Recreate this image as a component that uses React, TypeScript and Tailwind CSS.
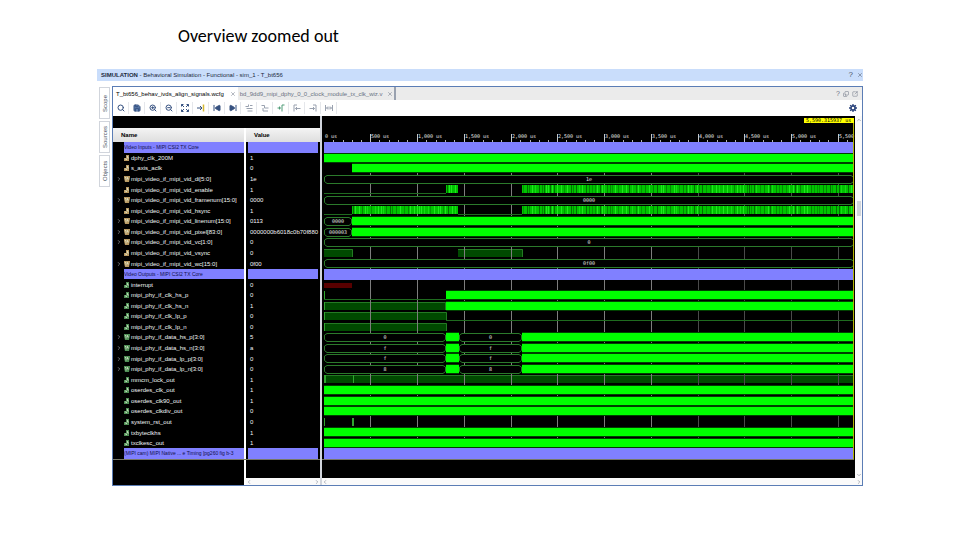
import type { ReactNode } from 'react';
import { ArrowRightToLine, ChevronDown, ChevronLeft, ChevronRight, ChevronUp, Copy, Save, Search, SkipBack, SkipForward, SquareArrowOutUpRight, X, ZoomIn, ZoomOut } from 'lucide-react';
import { clsx } from 'clsx';

type Kind = 'divider' | 'input' | 'output';

// lo: low line, hi: shaded high level, clk: solid toggling, burst: dense pulses
type Segment = { t: 'lo' | 'hi' | 'clk' | 'burst' | 'bus' | 'undef' | 'tick'; x: number; w: number; label?: string };

type Signal = { name: string; kind: Kind; value?: string; bus?: boolean; wave?: Segment[] };

const END = 530;
const ROW_H = 317 / 30;
const ROWS_TOP = 26;
const STEP = 46.75;

const clock = (x = 0): Segment[] => [{ t: 'clk', x, w: END - x }];
const bus = (label: string): Segment[] => [{ t: 'bus', x: 0, w: END, label }];
const dataLane = (a: string, b: string): Segment[] => [
  { t: 'bus', x: 0, w: 122, label: a },
  { t: 'clk', x: 122, w: 13 },
  { t: 'bus', x: 135, w: 63, label: b },
  { t: 'clk', x: 198, w: END - 198 },
];

const signals: Signal[] = [
  { name: 'Video Inputs - MIPI CSI2 TX Core', kind: 'divider' },
  { name: 'dphy_clk_200M', kind: 'input', value: '1', wave: clock() },
  { name: 's_axis_aclk', kind: 'input', value: '0', wave: clock(28) },
  { name: 'mipi_video_if_mipi_vid_di[5:0]', kind: 'input', bus: true, value: '1e', wave: bus('1e') },
  {
    name: 'mipi_video_if_mipi_vid_enable', kind: 'input', value: '1',
    wave: [{ t: 'lo', x: 0, w: 122 }, { t: 'burst', x: 122, w: 12 }, { t: 'burst', x: 198, w: END - 198 }],
  },
  { name: 'mipi_video_if_mipi_vid_framenum[15:0]', kind: 'input', bus: true, value: '0000', wave: bus('0000') },
  {
    name: 'mipi_video_if_mipi_vid_hsync', kind: 'input', value: '1',
    wave: [
      { t: 'lo', x: 0, w: 28 }, { t: 'burst', x: 28, w: 106 },
      { t: 'lo', x: 134, w: 64 }, { t: 'burst', x: 198, w: END - 198 },
    ],
  },
  {
    name: 'mipi_video_if_mipi_vid_linenum[15:0]', kind: 'input', bus: true, value: '0113',
    wave: [{ t: 'bus', x: 0, w: 28, label: '0000' }, ...clock(28)],
  },
  {
    name: 'mipi_video_if_mipi_vid_pixel[83:0]', kind: 'input', bus: true, value: '0000000b6018c0b70f880',
    wave: [{ t: 'bus', x: 0, w: 28, label: '000003' }, ...clock(28)],
  },
  { name: 'mipi_video_if_mipi_vid_vc[1:0]', kind: 'input', bus: true, value: '0', wave: bus('0') },
  {
    name: 'mipi_video_if_mipi_vid_vsync', kind: 'input', value: '0',
    wave: [{ t: 'hi', x: 0, w: 29 }, { t: 'hi', x: 134, w: 65 }],
  },
  { name: 'mipi_video_if_mipi_vid_wc[15:0]', kind: 'input', bus: true, value: '0f00', wave: bus('0f00') },
  { name: 'Video Outputs - MIPI CSI2 TX Core', kind: 'divider' },
  { name: 'interrupt', kind: 'output', value: '0', wave: [{ t: 'undef', x: 0, w: 28 }] },
  {
    name: 'mipi_phy_if_clk_hs_p', kind: 'output', value: '0',
    wave: [{ t: 'tick', x: 0, w: 1 }, { t: 'lo', x: 0, w: 122 }, ...clock(122)],
  },
  {
    name: 'mipi_phy_if_clk_hs_n', kind: 'output', value: '1',
    wave: [{ t: 'hi', x: 0, w: 122 }, { t: 'tick', x: 0, w: 1 }, ...clock(122)],
  },
  {
    name: 'mipi_phy_if_clk_lp_p', kind: 'output', value: '0',
    wave: [{ t: 'hi', x: 0, w: 123 }, { t: 'tick', x: 0, w: 1 }, { t: 'lo', x: 122, w: END - 122 }],
  },
  {
    name: 'mipi_phy_if_clk_lp_n', kind: 'output', value: '0',
    wave: [{ t: 'hi', x: 0, w: 123 }, { t: 'tick', x: 0, w: 1 }],
  },
  { name: 'mipi_phy_if_data_hs_p[3:0]', kind: 'output', bus: true, value: '5', wave: dataLane('0', '0') },
  { name: 'mipi_phy_if_data_hs_n[3:0]', kind: 'output', bus: true, value: 'a', wave: dataLane('f', 'f') },
  { name: 'mipi_phy_if_data_lp_p[3:0]', kind: 'output', bus: true, value: '0', wave: dataLane('f', 'f') },
  { name: 'mipi_phy_if_data_lp_n[3:0]', kind: 'output', bus: true, value: '0', wave: dataLane('8', '8') },
  {
    name: 'mmcm_lock_out', kind: 'output', value: '1',
    wave: [{ t: 'hi', x: 0, w: END }, { t: 'tick', x: 0, w: 2 }, { t: 'tick', x: 29, w: 1 }],
  },
  { name: 'oserdes_clk_out', kind: 'output', value: '1', wave: clock() },
  { name: 'oserdes_clk90_out', kind: 'output', value: '1', wave: clock() },
  { name: 'oserdes_clkdiv_out', kind: 'output', value: '0', wave: clock() },
  { name: 'system_rst_out', kind: 'output', value: '0', wave: [{ t: 'tick', x: 0, w: 1 }, { t: 'tick', x: 28, w: 2 }] },
  { name: 'txbyteclkhs', kind: 'output', value: '1', wave: clock() },
  { name: 'txclkesc_out', kind: 'output', value: '1', wave: clock() },
  { name: '(MIPI cam) MIPI Native ... e Timing [pg260 fig b-3', kind: 'divider' },
];

// the last label runs out of room at the right edge
const rulerLabels = ['0 us', '500 us', '1,000 us', '1,500 us', '2,000 us', '2,500 us', '3,000 us', '3,500 us', '4,000 us', '4,500 us', '5,000 us', '5,500'];

function Burst({ x, w }: { x: number; w: number }) {
  const pulses: ReactNode[] = [];
  const shades = ['#008c00', '#1fe81f', '#009a00', '#007200', '#14dc14', '#1fe81f'];
  let seed = x * 7 + 3;
  for (let p = 1; p < w - 1;) {
    seed = (seed * 16807) % 2147483647;
    pulses.push(<rect key={p} x={x + p} y={1} width={1} height={8} fill={shades[Math.floor(seed / 65536) % shades.length]} />);
    p += 2 + (Math.floor(seed / 4096) % 3);
  }
  return (
    <g>
      <rect x={x} y={1} width={w} height={8} fill="#00c400" />
      {pulses}
    </g>
  );
}

function Wave({ seg }: { seg: Segment }) {
  const { x, w } = seg;
  switch (seg.t) {
    case 'clk':
      return (
        <g>
          <rect x={x} y={0} width={w} height={10} fill="#004000" />
          <rect x={x} y={1} width={w} height={8} fill="#00ff00" />
        </g>
      );
    case 'lo':
      return <rect x={x} y={9} width={w} height={1} fill="#1f6b1f" />;
    case 'burst':
      return <Burst x={x} w={w} />;
    case 'undef':
      return <rect x={x} y={4} width={w} height={5} fill="#580000" />;
    case 'tick':
      return <rect x={x} y={1} width={w} height={8} fill="#2fa52f" />;
    case 'bus':
      return (
        <g>
          <path
            d={`M${x + 3} 1.5H${x + w - 3}L${x + w - 0.5} 3V7.5L${x + w - 3} 9.5H${x + 3}L${x + 0.5} 7.5V3Z`}
            fill="#000"
            stroke="#2b7a2b"
          />
          <text x={x + w / 2} y={7} textAnchor="middle" fill="#e5e5e5" className="font-['DejaVu_Sans_Mono',monospace] text-[5px]">
            {seg.label}
          </text>
        </g>
      );
    default:
      return null;
  }
}

function Waveform() {
  const rows = signals.map((s, i) => ({ ...s, y: Math.round(ROWS_TOP + i * ROW_H) }));
  return (
    <svg className="block h-[362px] w-full bg-black" role="img" aria-label="Waveform">
      <g transform="translate(2 0)">
        {rows.map((r) => r.wave?.filter((s) => s.t === 'hi').map((s) => (
          <g key={`${r.y}-${s.x}`}>
            <rect x={s.x} y={r.y + 1} width={s.w} height={8} fill="#004a00" />
            <path d={`M${s.x} ${r.y + 1.5}H${s.x + s.w - 0.5}V${r.y + 9}`} fill="none" stroke="#247a24" />
          </g>
        )))}

        {rulerLabels.map((label, i) => {
          const x = Math.floor(i * STEP);
          return (
            <g key={label}>
              {i > 0 && <rect x={x} y={18} width={1} height={325} fill={i > 7 ? '#4a4a4a' : '#7d7d7d'} />}
              {i > 0 && <rect x={x} y={18} width={1} height={8} fill="#c8c8c8" />}
              {[1, 2, 3, 4].map((m) => (
                <rect key={m} x={Math.round(x + (m * STEP) / 5)} y={24} width={1} height={2} fill="#b5b5b5" />
              ))}
              <text x={x + 1} y={22} fill="#e8e8e8" className="font-['DejaVu_Sans_Mono',monospace] text-[5px]">{label}</text>
            </g>
          );
        })}

        {rows.map((r) => (
          <g key={r.y} transform={`translate(0 ${r.y})`}>
            {r.kind === 'divider' && <rect y={0} width={END} height={11} fill="#8080ff" />}
            {r.wave?.map((s, i) => <Wave key={i} seg={s} />)}
          </g>
        ))}

        <rect x={-2} y={343} width={532} height={1} fill="#777766" />
        <rect x={529} y={2} width={1} height={341} fill="#b5b500" />
        <rect x={480} y={2} width={50} height={5} fill="#ffff00" />
        <text x={482} y={6} fill="#000" className="font-['DejaVu_Sans_Mono',monospace] text-[5px]">5,590.315937 us</text>
      </g>
    </svg>
  );
}

function SignalIcon({ kind, bus }: { kind: Kind; bus?: boolean }) {
  const frame = kind === 'input' ? '#b99a62' : '#4f8f55';
  return (
    <svg viewBox="0 0 6 6" className="h-1.5 w-1.5 shrink-0">
      <path d={bus ? 'M0 0h6v1L5 6H1L0 2z' : 'M0 3h2V0h3v6H0z'} fill={frame} />
      <path d={bus ? 'M1 1.5h1v3M3.5 1v2H5' : 'M1 4h1.5v1M3.5 1v2H5'} fill="none" stroke="#e4efd8" strokeWidth="0.7" />
    </svg>
  );
}

function SignalTable() {
  return (
    <table className="grid grid-rows-[14px_317px] bg-white text-[6px] leading-none text-gray-100">
      <thead className="grid">
        <tr className="grid grid-cols-[131px_74px] gap-x-0.5 text-left text-black">
          <th className="flex items-center bg-linear-to-b from-[#f4f4f4] to-[#dedede] pl-2">Name</th>
          <th className="flex items-center bg-linear-to-b from-[#f4f4f4] to-[#dedede] pl-2">Value</th>
        </tr>
      </thead>
      <tbody className="grid auto-rows-fr">
        {signals.map((s) => (
          <tr key={s.name} className="grid min-h-0 grid-cols-[131px_74px] gap-x-0.5">
            <td className="flex min-w-0 items-center overflow-hidden bg-black whitespace-nowrap">
              <span className="flex w-[11px] shrink-0 justify-center">
                {s.bus && (
                  <button aria-label={`Expand ${s.name}`} className="text-gray-300">
                    <ChevronRight className="h-1.5 w-1.5" />
                  </button>
                )}
              </span>
              {s.kind === 'divider' ? (
                <span className="flex h-full flex-1 items-center bg-[#8080ff] text-[5px] text-[#10104a]">{s.name}</span>
              ) : (
                <span className="flex items-center gap-px">
                  <SignalIcon kind={s.kind} bus={s.bus} />
                  {s.name}
                </span>
              )}
            </td>
            <td className={clsx('flex min-w-0 items-center overflow-hidden bg-black', s.kind === 'divider' ? 'px-0.5' : 'pl-1')}>
              {s.kind === 'divider' ? <span className="h-full flex-1 bg-[#8080ff]" /> : s.value}
            </td>
          </tr>
        ))}
      </tbody>
    </table>
  );
}

function ToolIcon({ d, mark }: { d: string; mark?: string }) {
  return (
    <svg viewBox="0 0 16 16" className="h-2 w-2" fill="none" stroke="currentColor" strokeWidth="2">
      <path d={d} />
      {mark && <path d={mark} stroke="#d6b933" strokeWidth="3" />}
    </svg>
  );
}

const lucide = 'h-2 w-2 stroke-3';

const tools: { label: string; icon: ReactNode; tone?: string }[] = [
  { label: 'Find', icon: <Search className={lucide} /> },
  { label: 'Save', icon: <Save className={clsx(lucide, 'fill-[#5f7fae]')} /> },
  { label: 'Zoom in', icon: <ZoomIn className={lucide} /> },
  { label: 'Zoom out', icon: <ZoomOut className={lucide} /> },
  { label: 'Zoom fit', icon: <ToolIcon d="M1 5V1h4M1 1l5 5M11 1h4v4M15 1l-5 5M1 11v4h4M1 15l5-5M15 11v4h-4M15 15l-5-5" /> },
  { label: 'Go to cursor', icon: <ToolIcon d="M0 8h9M6 4l4 4-4 4" mark="M13 1v14" /> },
  { label: 'Go to start', icon: <SkipBack className={clsx(lucide, 'fill-current')} /> },
  { label: 'Go to end', icon: <SkipForward className={clsx(lucide, 'fill-current')} /> },
  { label: 'Previous transition', icon: <ToolIcon d="M1 5h6V1M3 9h12M5 14h10M10 3h5" />, tone: 'text-gray-400' },
  { label: 'Next transition', icon: <ToolIcon d="M1 3h6v5h8M4 8v6h10" />, tone: 'text-gray-400' },
  { label: 'Add marker', icon: <ToolIcon d="M1 8h7M5 5v6M10 15V2h5" />, tone: 'text-[#4e9b77]' },
  { label: 'Previous marker', icon: <ToolIcon d="M8 2H2v13M5 9h10M8 6L5 9l3 3" />, tone: 'text-gray-400' },
  { label: 'Next marker', icon: <ToolIcon d="M8 2h6v13M1 9h10M8 6l3 3-3 3" />, tone: 'text-gray-400' },
  { label: 'Swap cursors', icon: <ToolIcon d="M1 2v12M15 2v12M3 8h10M6 5L3 8l3 3M10 5l3 3-3 3" />, tone: 'text-gray-400' },
];

function Toolbar() {
  return (
    <div className="flex h-4 items-center justify-between bg-white pr-[5px]">
      <div className="flex">
        {tools.map((t) => (
          <button
            key={t.label}
            aria-label={t.label}
            className={clsx('flex h-3 w-4 items-center justify-center border-r border-gray-200', t.tone ?? 'text-[#35507f]')}
          >
            {t.icon}
          </button>
        ))}
      </div>
      <button aria-label="Settings" className="text-[#2b447c]">
        <svg viewBox="0 0 16 16" className="h-2 w-2" fill="none" stroke="currentColor">
          <circle cx="8" cy="8" r="4.2" strokeWidth="3.4" />
          <path d="M8 0v3M8 13v3M0 8h3M13 8h3M2.3 2.3l2 2M11.7 11.7l2 2M2.3 13.7l2-2M11.7 4.3l2-2" strokeWidth="2.6" />
        </svg>
      </button>
    </div>
  );
}

function FileTabs() {
  return (
    <div className="flex h-[13px] items-stretch bg-[#ebebeb] text-[6px] leading-none">
      <div className="flex items-center gap-1.5 bg-white pr-0.5 pl-[3px]">
        <button className="text-black">T_bt656_behav_ivds_align_signals.wcfg</button>
        <button aria-label="Close tab" className="text-gray-500"><X className="h-1.5 w-1.5" /></button>
      </div>
      <div className="flex items-center gap-1 border-r-2 border-gray-400 pr-px pl-0.5 text-gray-500">
        <button>bd_9dd9_mipi_dphy_0_0_clock_module_tx_clk_wiz.v</button>
        <button aria-label="Close tab"><X className="h-1.5 w-1.5" /></button>
      </div>
      <div className="ml-auto flex items-center gap-[3px] pr-1 text-gray-500">
        <button aria-label="Help" className="text-[7px]">?</button>
        <button aria-label="Restore"><Copy className="h-1.5 w-1.5 -scale-y-100" /></button>
        <button aria-label="Float"><SquareArrowOutUpRight className="h-1.5 w-1.5" /></button>
      </div>
    </div>
  );
}

function SideTabs() {
  return (
    <div className="flex w-[15px] flex-col items-start pt-1.5 pl-0.5 text-[6px] leading-none text-gray-600">
      {['Scope', 'Sources', 'Objects'].map((label) => (
        <button
          key={label}
          className="mb-0.5 flex h-8 w-[11px] rotate-180 items-center justify-center border border-gray-300 bg-white [writing-mode:vertical-rl]"
        >
          {label}
        </button>
      ))}
    </div>
  );
}

export default function App() {
  return (
    <main className="min-h-screen bg-white px-[97px] font-['Liberation_Sans',sans-serif]">
      <h1 className="pt-6 pl-[81px] font-['Carlito','Open_Sans',sans-serif] text-lg leading-6 text-black">Overview zoomed out</h1>

      <section className="mt-[21px]">
        <header className="flex h-3 items-center justify-between bg-[#c9ddfb] pl-1 text-[6px] leading-none text-[#1c2a3c]">
          <span><b>SIMULATION</b> - Behavioral Simulation - Functional - sim_1 - T_bt656</span>
          <span className="flex items-center gap-1 text-gray-600">
            <button aria-label="Help" className="text-[8px]">?</button>
            <button aria-label="Close"><X className="h-1.5 w-1.5" /></button>
          </span>
        </header>

        <div className="flex">
          <SideTabs />
          <div className="mt-[5px] min-w-0 flex-1 border border-[#5b7db5]">
            <FileTabs />
            <Toolbar />
            <div className="flex">
              <div className="flex w-[209px] shrink-0 flex-col border-r-2 border-gray-300 bg-black">
                <div className="h-3" />
                <SignalTable />
                <div className="h-px bg-[#777766]" />
                <div className="grid flex-1 grid-cols-[131px_74px] gap-x-0.5 bg-white">
                  <div className="bg-black" />
                  <div className="flex flex-col bg-black">
                    <div className="mt-auto flex h-[7px] items-center justify-between bg-[#fafafa] text-gray-500">
                      <ChevronLeft className="h-1.5 w-1.5" />
                      <ChevronRight className="h-1.5 w-1.5" />
                    </div>
                  </div>
                </div>
              </div>

              <div className="min-w-0 flex-1">
                <div className="flex">
                  <div className="min-w-0 flex-1"><Waveform /></div>
                  <div className="flex w-[7px] flex-col items-center bg-[#fafafa] text-gray-500">
                    <ChevronUp className="mt-px h-1.5 w-1.5" />
                    <div className="mt-[78px] h-[15px] w-1 bg-gray-300" />
                    <ChevronDown className="mt-auto h-1.5 w-1.5" />
                  </div>
                </div>
                <div className="flex h-[7px] items-center justify-between bg-[#fafafa] text-gray-500">
                  <ChevronLeft className="h-1.5 w-1.5" />
                  <ChevronRight className="h-1.5 w-1.5" />
                </div>
              </div>
            </div>
          </div>
        </div>
      </section>
    </main>
  );
}
